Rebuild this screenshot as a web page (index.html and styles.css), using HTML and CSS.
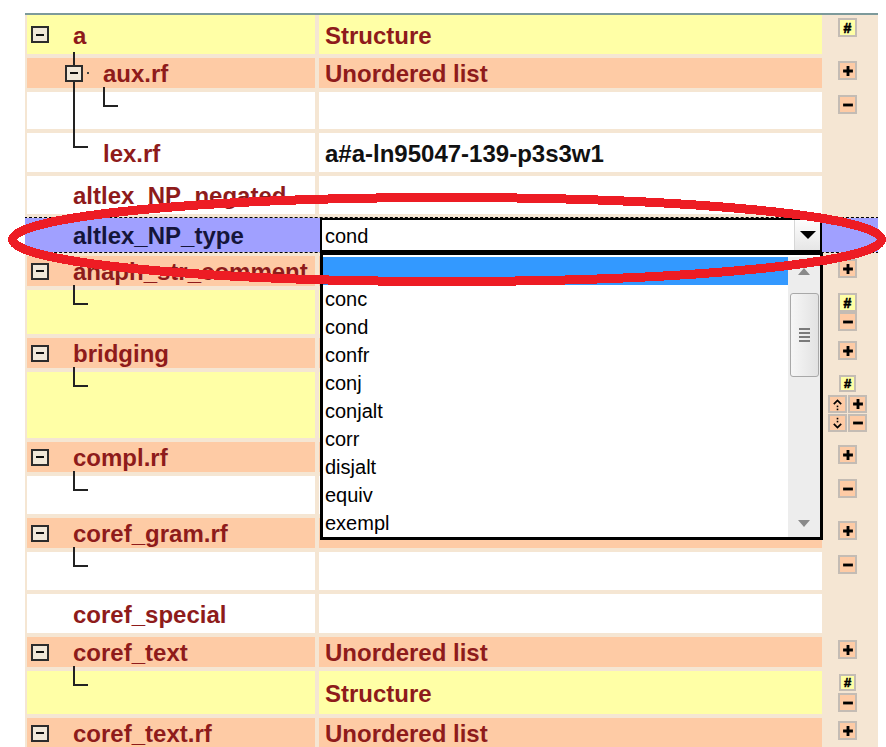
FILE: index.html
```html
<!DOCTYPE html>
<html lang="en">
<head>
<meta charset="utf-8">
<title>Attribute editor</title>
<link rel="stylesheet" href="styles.css">
</head>
<body>
<div class="page">
  <div class="editor">
    <span class="trunk"></span>

    <div class="row yellow struct">
      <div class="name toggled"><span class="toggle"></span><span class="label">a</span></div>
      <div class="value">Structure</div>
      <div class="tools"><button class="btn mark">#</button></div>
    </div>

    <div class="row salmon head">
      <div class="name nested"><span class="toggle"></span><span class="dot"></span><span class="label">aux.rf</span></div>
      <div class="value">Unordered list</div>
      <div class="tools"><button class="btn"><svg viewBox="0 0 11 11"><path d="M5.5 1v9M1 5.5h9"/></svg></button></div>
    </div>

    <div class="row white blank">
      <div class="name branch deep"><span class="elbow"></span></div>
      <div class="value"></div>
      <div class="tools"><button class="btn"><svg viewBox="0 0 11 11"><path d="M1 5.5h9"/></svg></button></div>
    </div>

    <div class="row white struct">
      <div class="name deep"><span class="label">lex.rf</span></div>
      <div class="value plain">a#a-ln95047-139-p3s3w1</div>
      <div class="tools"></div>
    </div>

    <div class="row white">
      <div class="name"><span class="label">altlex_NP_negated</span></div>
      <div class="value"></div>
      <div class="tools"></div>
    </div>

    <div class="row focus">
      <div class="name"><span class="label">altlex_NP_type</span></div>
      <div class="value">
        <div class="combo">
          <span class="combo-text">cond</span>
          <span class="combo-arrow"><svg viewBox="0 0 16 8"><path d="M0 0h16L8 8z"/></svg></span>
          <div class="listbox">
            <ul class="options">
              <li class="selected"></li>
              <li>conc</li>
              <li>cond</li>
              <li>confr</li>
              <li>conj</li>
              <li>conjalt</li>
              <li>corr</li>
              <li>disjalt</li>
              <li>equiv</li>
              <li>exempl</li>
            </ul>
            <div class="scrollbar">
              <span class="sb-arrow"><svg viewBox="0 0 12 7"><path d="M0 7L6 0l6 7z"/></svg></span>
              <span class="sb-thumb"><span class="grip"></span></span>
              <span class="sb-arrow down"><svg viewBox="0 0 12 7"><path d="M0 0h12L6 7z"/></svg></span>
            </div>
          </div>
        </div>
      </div>
      <div class="tools"></div>
    </div>

    <div class="row salmon head">
      <div class="name toggled"><span class="toggle"></span><span class="label">anaph_str_comment</span></div>
      <div class="value"></div>
      <div class="tools"><button class="btn"><svg viewBox="0 0 11 11"><path d="M5.5 1v9M1 5.5h9"/></svg></button></div>
    </div>

    <div class="row yellow list-body">
      <div class="name branch"><span class="elbow"></span></div>
      <div class="value"></div>
      <div class="tools">
        <button class="btn mark">#</button>
        <button class="btn"><svg viewBox="0 0 11 11"><path d="M1 5.5h9"/></svg></button>
      </div>
    </div>

    <div class="row salmon head">
      <div class="name toggled"><span class="toggle"></span><span class="label">bridging</span></div>
      <div class="value"></div>
      <div class="tools"><button class="btn"><svg viewBox="0 0 11 11"><path d="M5.5 1v9M1 5.5h9"/></svg></button></div>
    </div>

    <div class="row yellow list-body wide">
      <div class="name branch"><span class="elbow"></span></div>
      <div class="value"></div>
      <div class="tools">
        <button class="btn mark small">#</button>
        <div class="move-grid">
          <button class="btn"><svg viewBox="0 0 13 13" class="move"><path d="M2.8 6.2L6.5 2.5l3.7 3.7"/><rect x="5.7" y="7.6" width="1.6" height="1.6"/><rect x="5.7" y="10.6" width="1.6" height="1.6"/></svg></button>
          <button class="btn"><svg viewBox="0 0 11 11"><path d="M5.5 1v9M1 5.5h9"/></svg></button>
          <button class="btn"><svg viewBox="0 0 13 13" class="move"><rect x="5.7" y="0.8" width="1.6" height="1.6"/><rect x="5.7" y="3.8" width="1.6" height="1.6"/><path d="M2.8 6.8l3.7 3.7 3.7-3.7"/></svg></button>
          <button class="btn"><svg viewBox="0 0 11 11"><path d="M1 5.5h9"/></svg></button>
        </div>
      </div>
    </div>

    <div class="row salmon head">
      <div class="name toggled"><span class="toggle"></span><span class="label">compl.rf</span></div>
      <div class="value"></div>
      <div class="tools"><button class="btn"><svg viewBox="0 0 11 11"><path d="M5.5 1v9M1 5.5h9"/></svg></button></div>
    </div>

    <div class="row white">
      <div class="name branch"><span class="elbow"></span></div>
      <div class="value"></div>
      <div class="tools"><button class="btn"><svg viewBox="0 0 11 11"><path d="M1 5.5h9"/></svg></button></div>
    </div>

    <div class="row salmon head">
      <div class="name toggled"><span class="toggle"></span><span class="label">coref_gram.rf</span></div>
      <div class="value"></div>
      <div class="tools"><button class="btn"><svg viewBox="0 0 11 11"><path d="M5.5 1v9M1 5.5h9"/></svg></button></div>
    </div>

    <div class="row white">
      <div class="name branch"><span class="elbow"></span></div>
      <div class="value"></div>
      <div class="tools"><button class="btn"><svg viewBox="0 0 11 11"><path d="M1 5.5h9"/></svg></button></div>
    </div>

    <div class="row white struct">
      <div class="name"><span class="label">coref_special</span></div>
      <div class="value"></div>
      <div class="tools"></div>
    </div>

    <div class="row salmon head">
      <div class="name toggled"><span class="toggle"></span><span class="label">coref_text</span></div>
      <div class="value">Unordered list</div>
      <div class="tools"><button class="btn"><svg viewBox="0 0 11 11"><path d="M5.5 1v9M1 5.5h9"/></svg></button></div>
    </div>

    <div class="row yellow item-body">
      <div class="name branch"><span class="elbow"></span></div>
      <div class="value">Structure</div>
      <div class="tools">
        <button class="btn mark small">#</button>
        <button class="btn"><svg viewBox="0 0 11 11"><path d="M1 5.5h9"/></svg></button>
      </div>
    </div>

    <div class="row salmon head">
      <div class="name toggled"><span class="toggle"></span><span class="label">coref_text.rf</span></div>
      <div class="value">Unordered list</div>
      <div class="tools"><button class="btn"><svg viewBox="0 0 11 11"><path d="M5.5 1v9M1 5.5h9"/></svg></button></div>
    </div>

    <div class="row white">
      <div class="name branch"><span class="elbow"></span></div>
      <div class="value"></div>
      <div class="tools"></div>
    </div>
  </div>

  <svg class="mark-ring" viewBox="0 0 886 747">
    <ellipse cx="447" cy="239.5" rx="434.5" ry="42"/>
  </svg>
</div>
</body>
</html>
```

FILE: styles.css
```css
* {
  box-sizing: border-box;
}

html,
body {
  margin: 0;
  height: 100%;
  overflow: hidden;
  background: #fff;
}

body {
  font-family: "Liberation Sans", Arial, sans-serif;
}

.page {
  position: relative;
  width: 886px;
  height: 747px;
  padding-top: 13px;
  overflow: hidden;
}

/* attribute table */
.editor {
  position: relative;
  margin-left: 25px;
  width: 853px;
  height: 734px;
  overflow: hidden;
  background: #f5e6d3;
  border-top: 2px solid #7d9a9b;
  display: flex;
  flex-direction: column;
  gap: 4px;
}

.row {
  flex: none;
  display: grid;
  grid-template-columns: 288px 503px 52px;
  column-gap: 4px;
  padding-left: 2px;
  height: 38px;
}

.row.struct { height: 39px; }
.row.head { height: 30px; }
.row.blank { height: 37px; }
.row.focus { height: 34px; }
.row.list-body { height: 44px; }
.row.list-body.wide { height: 66px; }
.row.item-body { height: 43px; }

.row.yellow .name,
.row.yellow .value { background: #ffffa6; }

.row.salmon .name,
.row.salmon .value { background: #fecba5; }

.row.white .name,
.row.white .value { background: #fff; }

.row.focus {
  background: #a0a0ff;
  outline: 1px dashed #000;
}

.name,
.value {
  display: flex;
  align-items: center;
  padding-top: 2px;
  font-size: 24px;
  font-weight: bold;
  line-height: 1;
  color: #8e1b1b;
  white-space: nowrap;
}

.name {
  padding-left: 46px;
}

.name.toggled { padding-left: 4px; }
.name.nested { padding-left: 38px; }
.name.deep { padding-left: 76px; }

.name.branch {
  display: block;
  padding-top: 0;
}

.value {
  padding-left: 6px;
}

.value.plain {
  color: #111;
}

.row.focus .name {
  color: #15153a;
}

.row.focus .value {
  padding: 0;
  align-items: stretch;
}

.toggle {
  position: relative;
  flex: none;
  width: 18px;
  height: 17px;
  margin-top: -2px;
  border: 2px solid #2c2c2c;
  background: #f1e8d9;
}

.toggle::after {
  content: "";
  position: absolute;
  left: 3px;
  right: 3px;
  top: 5.5px;
  height: 2px;
  background: #111;
}

.toggled .label {
  margin-left: 24px;
}

.dot {
  flex: none;
  width: 2px;
  height: 2px;
  margin: -2px 0 0 4px;
  background: #444;
}

.nested .label {
  margin-left: 14px;
}

/* tree connectors */
.trunk {
  position: absolute;
  left: 48px;
  top: 37px;
  width: 15px;
  height: 96px;
  border-left: 2px solid #222;
  border-bottom: 2px solid #222;
}

.elbow {
  display: block;
  width: 15px;
  height: 20px;
  margin-top: -5px;
  border-left: 2px solid #222;
  border-bottom: 2px solid #222;
}

/* per-row action buttons */
.tools {
  display: flex;
  flex-direction: column;
  align-items: center;
  padding: 3px 9px 0 0;
}

.btn {
  flex: none;
  width: 19px;
  height: 19px;
  padding: 0;
  margin: 0;
  border: 2px solid #c4bcb4;
  background: #fecba5;
  display: grid;
  place-items: center;
  font: bold 14px/1 "Liberation Sans", Arial, sans-serif;
  color: #000;
}

.btn svg {
  display: block;
  width: 12px;
  height: 12px;
  stroke: #000;
  stroke-width: 2.6;
  fill: none;
}

.btn svg.move {
  width: 13px;
  height: 13px;
  stroke-width: 1.7;
}

.btn svg.move rect {
  fill: #000;
  stroke: none;
}

.btn.mark {
  background: #ffffa6;
  -webkit-text-stroke: 0.6px #000;
}

.btn.mark.small {
  width: 17px;
  height: 17px;
  margin-bottom: 2px;
  font-size: 13px;
}

.move-grid {
  display: grid;
  grid-template-columns: 19px 19px;
  grid-auto-rows: 18px;
  gap: 1px;
  margin-top: 1px;
}

.move-grid .btn {
  height: 18px;
}

/* combo box */
.combo {
  position: relative;
  margin-left: 1px;
  width: 502px;
  height: 34px;
  background: #fff;
  border: 2px solid #000;
  display: flex;
  align-items: stretch;
  font: 20px/1 "Liberation Sans", Arial, sans-serif;
  color: #000;
}

.combo-text {
  flex: 1;
  display: flex;
  align-items: center;
  padding: 2px 0 0 3px;
}

.combo-arrow {
  width: 26px;
  display: grid;
  place-items: center;
  background: linear-gradient(#fdfdfd, #e6e6e6);
  border-left: 1px solid #d6d6d6;
}

.combo-arrow svg {
  width: 16px;
  height: 8px;
  fill: #000;
}

.listbox {
  position: absolute;
  left: -2px;
  top: calc(100% + 2px);
  width: 503px;
  height: 288px;
  border: 3px solid #000;
  padding-top: 2px;
  background: #fff;
  display: flex;
  z-index: 2;
}

.options {
  flex: 1;
  margin: 0;
  padding: 0;
  list-style: none;
}

.options li {
  height: 28px;
  line-height: 28px;
  padding-left: 2px;
  font-size: 20px;
  color: #000;
}

.options li.selected {
  background: #3399ff;
}

.scrollbar {
  width: 32px;
  background: #ededed;
  display: flex;
  flex-direction: column;
  align-items: center;
}

.sb-arrow {
  height: 28px;
  display: grid;
  place-items: center;
}

.sb-arrow svg {
  width: 12px;
  height: 7px;
  fill: #8a8a8a;
}

.sb-arrow.down {
  margin-top: auto;
}

.sb-thumb {
  margin-top: 8px;
  width: 29px;
  height: 84px;
  border: 1px solid #a8a8a8;
  border-radius: 3px;
  background: linear-gradient(90deg, #f6f6f6, #e2e2e2);
  display: grid;
  place-items: center;
}

.grip {
  width: 11px;
  height: 14px;
  background: repeating-linear-gradient(#7a7a7a 0 2px, transparent 2px 4px);
}

/* annotation ring drawn over the table */
.mark-ring {
  position: absolute;
  left: 0;
  top: 0;
  width: 886px;
  height: 747px;
  pointer-events: none;
  z-index: 5;
}

.mark-ring ellipse {
  fill: none;
  stroke: #ed1c24;
  stroke-width: 9;
  shape-rendering: crispEdges;
}
```
